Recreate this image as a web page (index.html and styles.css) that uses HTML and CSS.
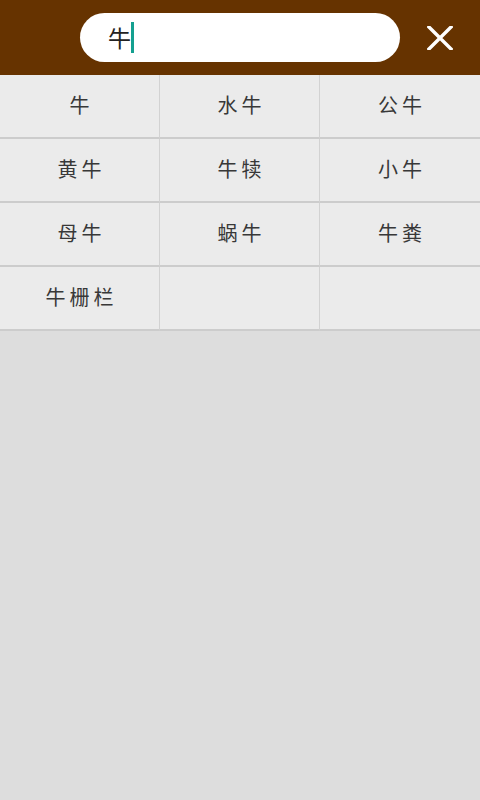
FILE: index.html
```html
<!DOCTYPE html>
<html lang="zh-CN">
<head>
<meta charset="utf-8">
<link rel="stylesheet" href="styles.css">
</head>
<body>
<header class="topbar">
  <div class="search">
    <span class="query">牛</span><span class="caret"></span>
  </div>
  <button class="close" aria-label="关闭">
    <svg width="26" height="24" viewBox="0 0 26 24"><path d="M2 1 L24 23 M24 1 L2 23" stroke="#fff" stroke-width="3.4" stroke-linecap="square" fill="none"/></svg>
  </button>
</header>
<main class="grid">
  <div class="cell">牛</div>
  <div class="cell">水牛</div>
  <div class="cell">公牛</div>
  <div class="cell">黄牛</div>
  <div class="cell">牛犊</div>
  <div class="cell">小牛</div>
  <div class="cell">母牛</div>
  <div class="cell">蜗牛</div>
  <div class="cell">牛粪</div>
  <div class="cell">牛栅栏</div>
  <div class="cell"></div>
  <div class="cell"></div>
</main>
</body>
</html>
```
FILE: styles.css
```css
html, body {
  margin: 0;
  padding: 0;
}
body {
  width: 480px;
  height: 800px;
  background: #dddddd;
  font-family: "Noto Sans CJK SC", "Noto Sans", sans-serif;
}
.topbar {
  height: 75px;
  background: #663300;
  display: flex;
  align-items: center;
  padding-left: 80px;
  box-sizing: border-box;
}
.search {
  width: 320px;
  height: 49px;
  background: #fff;
  border-radius: 25px;
  display: flex;
  align-items: center;
  padding-left: 28px;
  box-sizing: border-box;
  margin-top: -1px;
}
.query {
  font-size: 23px;
  color: #222;
  line-height: 30px;
}
.caret {
  width: 3px;
  height: 31px;
  background: #14a090;
}
.close {
  border: 0;
  background: none;
  padding: 0;
  margin-left: 27px;
  width: 26px;
  height: 24px;
  display: flex;
  margin-top: 1px;
}
.grid {
  display: grid;
  grid-template-columns: 159px 161px 160px;
}
.cell {
  height: 62px;
  background: #ebebeb;
  border-bottom: 2px solid #cccccc;
  display: flex;
  align-items: center;
  justify-content: center;
  font-size: 20px;
  letter-spacing: 4px;
  padding-left: 4px;
  padding-bottom: 3px;
  box-sizing: content-box;
  color: #383838;
}
.cell:nth-child(3n+2) {
  border-left: 1px solid #d2d2d2;
  border-right: 1px solid #d2d2d2;
}
.cell {
  height: 59px;
}
```
